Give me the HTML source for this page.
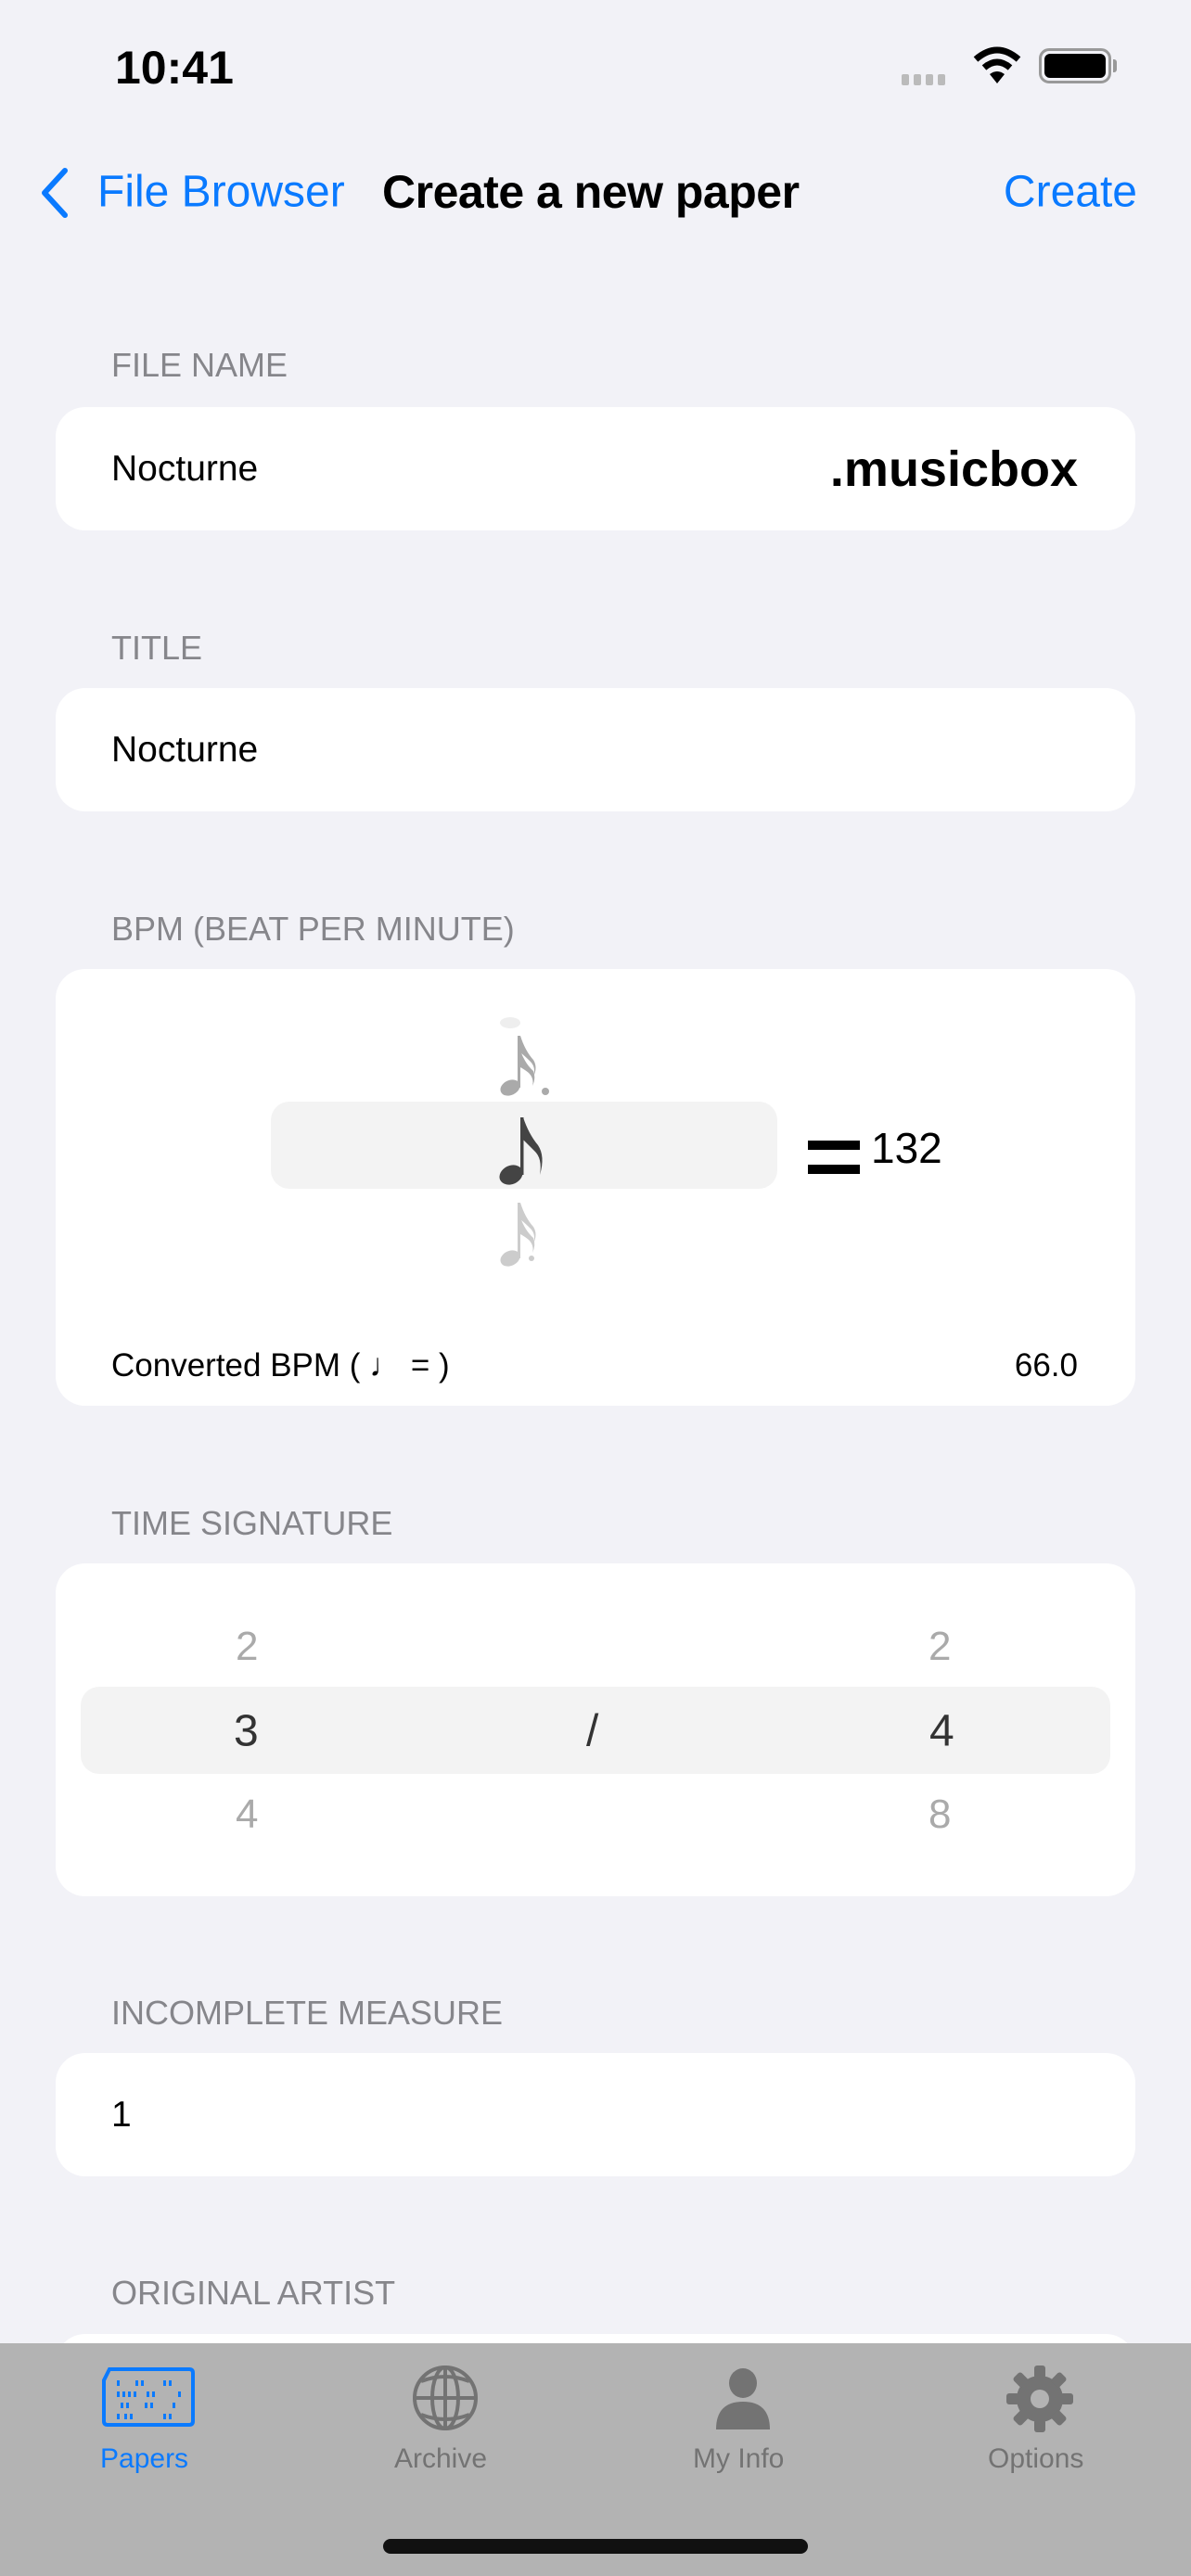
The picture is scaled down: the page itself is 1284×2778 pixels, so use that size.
<!DOCTYPE html>
<html><head><meta charset="utf-8"><style>
*{margin:0;padding:0;box-sizing:border-box}
body{width:1284px;height:2778px;background:#f2f2f7;font-family:"Liberation Sans","DejaVu Sans",sans-serif;position:relative;overflow:hidden;color:#000}
.a{position:absolute;white-space:nowrap}
.lbl{position:absolute;left:120px;font-size:36px;color:#86868b;transform:translateY(-50%)}
.card{position:absolute;left:60px;width:1164px;background:#fff;border-radius:32px}
.t{position:absolute;transform:translateY(-50%);white-space:nowrap}
</style></head><body>
<div class="t" style="left:124px;top:73px;font-size:50px;font-weight:bold">10:41</div>
<div class="a" style="left:972px;top:80px;display:flex;gap:5px"><i style="width:8px;height:12px;background:#bbb;border-radius:2px;display:block"></i><i style="width:8px;height:12px;background:#bbb;border-radius:2px;display:block"></i><i style="width:8px;height:12px;background:#bbb;border-radius:2px;display:block"></i><i style="width:8px;height:12px;background:#bbb;border-radius:2px;display:block"></i></div>
<svg class="a" style="left:1048px;top:50px" width="54" height="42" viewBox="0 0 54 42"><path d="M4 14 Q27 -6 50 14" stroke="#000" stroke-width="7" fill="none"/><path d="M13 23 Q27 11 41 23" stroke="#000" stroke-width="7" fill="none"/><path d="M19 30 L27 40 L35 30 Q27 24 19 30Z" fill="#000"/></svg>
<div class="a" style="left:1120px;top:52px;width:78px;height:38px;border:3px solid #999;border-radius:11px;padding:3px"><div style="background:#000;width:100%;height:100%;border-radius:6px"></div></div>
<div class="a" style="left:1200px;top:64px;width:4px;height:14px;background:#999;border-radius:0 3px 3px 0"></div>

<svg class="a" style="left:38px;top:180px" width="40" height="56" viewBox="0 0 40 56"><path d="M32 4 L10 28 L32 52" stroke="#0a7aff" stroke-width="6" fill="none" stroke-linecap="round" stroke-linejoin="round"/></svg>
<div class="t" style="left:105px;top:207px;font-size:48px;color:#0a7aff">File Browser</div>
<div class="t" style="left:412px;top:207px;font-size:50px;font-weight:bold;letter-spacing:-0.5px">Create a new paper</div>
<div class="t" style="right:58px;top:207px;font-size:48px;color:#0a7aff">Create</div>

<div class="lbl" style="top:394px">FILE NAME</div>
<div class="card" style="top:439px;height:133px"></div>
<div class="t" style="left:120px;top:506px;font-size:39px">Nocturne</div>
<div class="t" style="right:122px;top:506px;font-size:54px;font-weight:bold">.musicbox</div>

<div class="lbl" style="top:699px">TITLE</div>
<div class="card" style="top:742px;height:133px"></div>
<div class="t" style="left:120px;top:809px;font-size:39px">Nocturne</div>

<div class="lbl" style="top:1002px">BPM (BEAT PER MINUTE)</div>
<div class="card" style="top:1045px;height:471px"></div>
<div class="a" style="left:292px;top:1188px;width:546px;height:94px;background:#f3f3f3;border-radius:20px"></div>
<svg class="a" style="left:530px;top:1095px" width="80" height="290" viewBox="0 0 80 290">
<g fill="#eee"><ellipse cx="20" cy="8" rx="11" ry="6"/></g>
<g fill="#aaa"><ellipse cx="20" cy="78" rx="11" ry="8" transform="rotate(-25 20 78)"/><rect x="28" y="22" width="3" height="56"/><path d="M31 22 Q36 38 45 48 Q50 56 45 66 Q48 56 42 50 Q36 44 31 40Z"/><path d="M31 38 Q36 52 45 60 Q48 68 44 76 Q46 68 40 62 Q35 58 31 56Z"/><circle cx="58" cy="82" r="4"/></g>
<g fill="#444"><ellipse cx="21" cy="172" rx="13" ry="10" transform="rotate(-25 21 172)"/><rect x="31" y="110" width="3.5" height="62"/><path d="M34 110 Q40 128 50 140 Q58 152 52 172 Q55 154 46 146 Q40 140 34 134Z"/></g>
<g fill="#ccc"><ellipse cx="20" cy="262" rx="11" ry="8" transform="rotate(-25 20 262)"/><rect x="28" y="202" width="3" height="60"/><path d="M31 202 Q36 218 45 228 Q50 236 45 246 Q48 236 42 230 Q36 224 31 220Z"/><path d="M31 218 Q36 232 45 240 Q48 248 44 256 Q46 248 40 242 Q35 238 31 236Z"/><circle cx="43" cy="262" r="3"/></g>
</svg>
<div class="a" style="left:871px;top:1230px;width:56px;height:10px;background:#000"></div>
<div class="a" style="left:871px;top:1256px;width:56px;height:10px;background:#000"></div>
<div class="t" style="left:939px;top:1238px;font-size:46px">132</div>
<div class="t" style="left:120px;top:1473px;font-size:35px">Converted BPM ( &#9833; = )</div>
<div class="t" style="right:122px;top:1473px;font-size:35px">66.0</div>

<div class="lbl" style="top:1643px">TIME SIGNATURE</div>
<div class="card" style="top:1686px;height:359px"></div>
<div class="a" style="left:87px;top:1819px;width:1110px;height:94px;background:#f3f3f3;border-radius:20px"></div>
<div class="t" style="left:254px;top:1776px;font-size:44px;color:#aaa">2</div>
<div class="t" style="left:252px;top:1867px;font-size:48px;color:#333">3</div>
<div class="t" style="left:254px;top:1957px;font-size:44px;color:#aaa">4</div>
<div class="t" style="left:632px;top:1867px;font-size:48px;color:#333">/</div>
<div class="t" style="left:1001px;top:1776px;font-size:44px;color:#aaa">2</div>
<div class="t" style="left:1002px;top:1867px;font-size:48px;color:#333">4</div>
<div class="t" style="left:1001px;top:1957px;font-size:44px;color:#aaa">8</div>

<div class="lbl" style="top:2171px">INCOMPLETE MEASURE</div>
<div class="card" style="top:2214px;height:133px"></div>
<div class="t" style="left:120px;top:2281px;font-size:39px">1</div>

<div class="lbl" style="top:2473px">ORIGINAL ARTIST</div>
<div class="card" style="top:2517px;height:100px"></div>

<div class="a" style="left:0;top:2527px;width:1284px;height:251px;background:#b3b3b3"></div>
<svg class="a" style="left:110px;top:2553px" width="100" height="64" viewBox="0 0 100 64"><path d="M8 2 H94 Q98 2 98 6 V58 Q98 62 94 62 H6 Q2 62 2 58 V14 Z" fill="none" stroke="#0a7aff" stroke-width="4"/><g fill="#0a7aff"><rect x="16" y="14" width="3" height="6"/><rect x="36" y="14" width="3" height="6"/><rect x="42" y="14" width="3" height="6"/><rect x="66" y="14" width="3" height="6"/><rect x="72" y="14" width="3" height="6"/><rect x="16" y="26" width="3" height="6"/><rect x="22" y="26" width="3" height="6"/><rect x="28" y="26" width="3" height="6"/><rect x="34" y="26" width="3" height="6"/><rect x="48" y="26" width="3" height="6"/><rect x="54" y="26" width="3" height="6"/><rect x="82" y="26" width="3" height="6"/><rect x="20" y="38" width="3" height="6"/><rect x="26" y="38" width="3" height="6"/><rect x="46" y="38" width="3" height="6"/><rect x="52" y="38" width="3" height="6"/><rect x="76" y="38" width="3" height="6"/><rect x="16" y="50" width="3" height="6"/><rect x="24" y="50" width="3" height="6"/><rect x="30" y="50" width="3" height="6"/><rect x="66" y="50" width="3" height="6"/><rect x="72" y="50" width="3" height="6"/></g></svg>
<svg class="a" style="left:444px;top:2550px" width="72" height="72" viewBox="0 0 72 72" fill="none" stroke="#737373" stroke-width="4"><ellipse cx="36" cy="36" rx="33" ry="33"/><ellipse cx="36" cy="36" rx="14" ry="33"/><line x1="36" y1="3" x2="36" y2="69"/><line x1="3" y1="36" x2="69" y2="36"/><path d="M10 18 Q36 8 62 18 M10 54 Q36 64 62 54"/></svg>
<svg class="a" style="left:770px;top:2554px" width="62" height="66" viewBox="0 0 62 66" fill="#737373"><ellipse cx="31" cy="16" rx="15" ry="16"/><path d="M2 66 Q2 36 31 36 Q60 36 60 66Z"/></svg>
<svg class="a" style="left:1084px;top:2550px" width="74" height="74" viewBox="-37 -37 74 74"><g fill="#737373"><circle r="25"/><g id="t"><rect x="-6" y="-36" width="12" height="14" rx="3"/></g><use href="#t" transform="rotate(45)"/><use href="#t" transform="rotate(90)"/><use href="#t" transform="rotate(135)"/><use href="#t" transform="rotate(180)"/><use href="#t" transform="rotate(225)"/><use href="#t" transform="rotate(270)"/><use href="#t" transform="rotate(315)"/></g><circle r="10" fill="#b3b3b3"/></svg>
<div class="t" style="left:108px;top:2652px;font-size:30px;color:#0a7aff">Papers</div>
<div class="t" style="left:425px;top:2652px;font-size:30px;color:#737373">Archive</div>
<div class="t" style="left:747px;top:2652px;font-size:30px;color:#737373">My Info</div>
<div class="t" style="left:1065px;top:2652px;font-size:30px;color:#737373">Options</div>
<div class="a" style="left:413px;top:2738px;width:458px;height:16px;background:#111;border-radius:8px"></div>
</body></html>
